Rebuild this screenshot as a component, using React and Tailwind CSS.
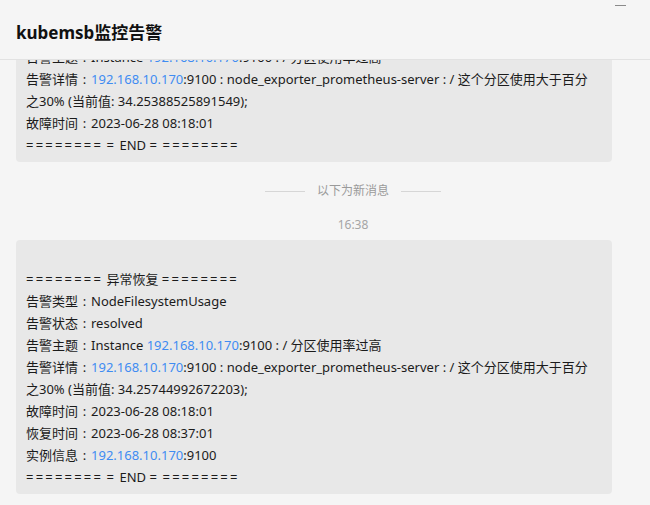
import React from 'react';

const IP = '192.168.10.170';

const Ip = () => <span className="text-[#3f8cf2]">{IP}</span>;

// full-width colon, centred like the reference font draws it
const C = () => <span className="inline-block w-[13px] text-center">:</span>;

// runs of "=" are drawn wider in the reference font
const Eq = ({ n = 8 }) => <span className="tracking-[2.2px]">{'='.repeat(n)}</span>;

const Line = ({ children }) => (
  <div className="h-[22px] leading-[22px] whitespace-nowrap">{children}</div>
);

const Bubble = ({ className = '', lines }) => (
  <div className={`mx-4 w-[596px] rounded-[4px] bg-[#e8e8e8] px-[10px] pt-[6px] pb-[6px] text-[13px] text-[#1b1b1b] ${className}`}>
    <Line>&nbsp;</Line>
    {lines.map((l, i) => (
      <Line key={i}>{l}</Line>
    ))}
  </div>
);

const detailLines = (value) => [
  <>告警详情<C /><Ip />:9100 : node_exporter_prometheus-server : / 这个分区使用大于百分</>,
  <>之30% (当前值: {value});</>,
];

const endLine = <><Eq /> <Eq n={1} /> END <Eq n={1} /> <Eq /></>;

export default function App() {
  const firing = [
    <><Eq /> 监控告警 <Eq /></>,
    <>告警类型<C />NodeFilesystemUsage</>,
    <>告警状态<C />firing</>,
    <>告警主题<C />Instance <Ip />:9100 : / 分区使用率过高</>,
    ...detailLines('34.25388525891549'),
    <>故障时间<C />2023-06-28 08:18:01</>,
    endLine,
  ];

  const resolved = [
    <><Eq /> 异常恢复 <Eq /></>,
    <>告警类型<C />NodeFilesystemUsage</>,
    <>告警状态<C />resolved</>,
    <>告警主题<C />Instance <Ip />:9100 : / 分区使用率过高</>,
    ...detailLines('34.25744992672203'),
    <>故障时间<C />2023-06-28 08:18:01</>,
    <>恢复时间<C />2023-06-28 08:37:01</>,
    <>实例信息<C /><Ip />:9100</>,
    endLine,
  ];

  return (
    <div
      className="relative flex h-[505px] w-[650px] flex-col overflow-hidden bg-[#f5f5f5]"
      style={{ fontFamily: '"Noto Sans", "Noto Sans CJK SC", sans-serif' }}
    >
      {/* window minimize */}
      <div className="absolute right-[24px] top-[5px] h-px w-[11px] bg-[#8a8a8a]" />

      {/* header */}
      <div className="flex h-[60px] shrink-0 items-center border-b border-[#e2e2e2] pl-4 pt-[6px]">
        <h1 className="text-[17px] font-bold text-[#111]">kubemsb监控告警</h1>
      </div>

      {/* messages */}
      <div className="flex-1 overflow-hidden">
        <Bubble className="mt-[-108px]" lines={firing} />

        <div className="mt-[20px] flex h-[18px] items-center justify-center gap-3 pl-[56px] text-[12px] text-[#9a9a9a]">
          <span className="h-px w-10 bg-[#d6d6d6]" />
          <span>以下为新消息</span>
          <span className="h-px w-10 bg-[#d6d6d6]" />
        </div>

        <div className="mt-[16px] h-[18px] pl-[56px] text-center text-[12px] leading-[18px] text-[#a5a5a5]">
          16:38
        </div>

        <Bubble className="mt-[6px]" lines={resolved} />
      </div>
    </div>
  );
}
